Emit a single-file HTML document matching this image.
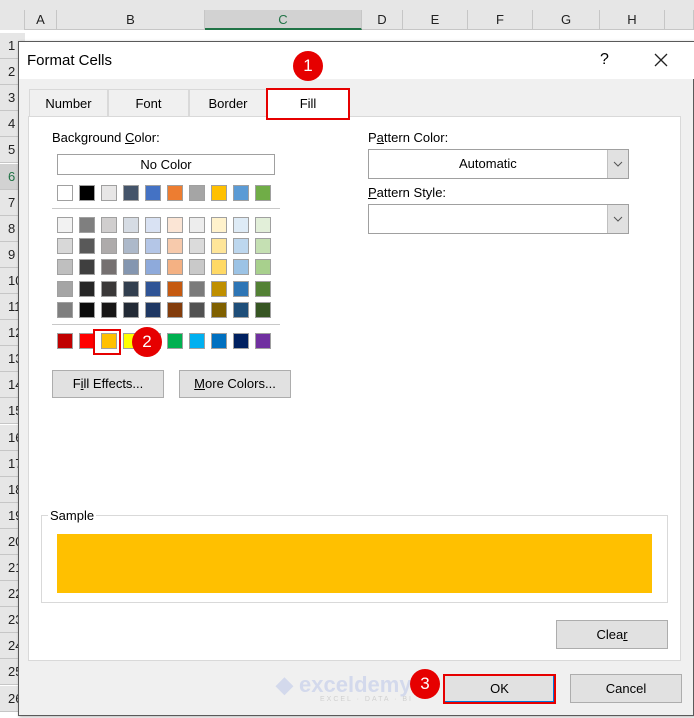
<!DOCTYPE html>
<html><head><style>
*{box-sizing:border-box;margin:0;padding:0}
body{width:694px;height:718px;overflow:hidden;background:#fff;font-family:"Liberation Sans",sans-serif;font-size:13px;color:#000;position:relative}
.a{position:absolute}
.ch{position:absolute;top:10px;height:20px;background:#e6e6e6;border-right:1px solid #c6c6c6;border-bottom:1px solid #c6c6c6;text-align:center;line-height:20px;font-size:13px;color:#222}
.rh{position:absolute;left:0;width:25px;background:#e6e6e6;border-bottom:1px solid #c6c6c6;font-size:13px;color:#222;padding-left:8px}
.sw{position:absolute;width:16px;height:16px;border:1px solid #a0a0a0}
.btn{position:absolute;background:#e1e1e1;border:1px solid #adadad;text-align:center;font-size:13px}
.tab{position:absolute;top:89px;height:27px;border:1px solid #d9d9d9;border-bottom:none;text-align:center;line-height:27px;background:#f0f0f0}
.badge{position:absolute;width:30px;height:30px;border-radius:50%;background:#e60000;color:#fff;text-align:center;line-height:30px;font-size:17px}
u{text-decoration:underline}
</style></head><body>
<div class="a" style="left:0;top:0;width:694px;height:10px;background:#e6e6e6"></div>
<div class="a" style="left:0;top:10px;width:25px;height:20px;background:#e6e6e6;border-right:1px solid #c6c6c6"></div>
<div class="ch" style="left:25px;width:32px">A</div>
<div class="ch" style="left:57px;width:148px">B</div>
<div class="ch" style="left:205px;width:157px;background:#d2d2d2;border-bottom:2px solid #217346;color:#217346">C</div>
<div class="ch" style="left:362px;width:41px">D</div>
<div class="ch" style="left:403px;width:65px">E</div>
<div class="ch" style="left:468px;width:65px">F</div>
<div class="ch" style="left:533px;width:67px">G</div>
<div class="ch" style="left:600px;width:65px">H</div>
<div class="ch" style="left:665px;width:29px"></div>
<div id="rows"></div>
<script>
var h='';for(var i=1;i<=26;i++){var t=33+(i-1)*26.1;h+='<div class="rh" style="top:'+t+'px;height:26px;line-height:26px;'+(i==6?'background:#d2d2d2;color:#217346':'')+'">'+i+'</div>';}
document.getElementById('rows').outerHTML=h;
</script>
<div class="a" style="left:18px;top:41px;width:676px;height:675px;background:#f0f0f0;border:1px solid #5a5a5a;box-shadow:1px 1px 3px rgba(0,0,0,.3)"></div>
<div class="a" style="left:19px;top:42px;width:675px;height:37px;background:#fff"></div>
<div class="a" style="left:27px;top:52px;font-size:15px">Format Cells</div>
<div class="a" style="left:600px;top:51px;font-size:16px">?</div>
<svg class="a" style="left:654px;top:53px" width="14" height="14"><path d="M1 1L13 13M13 1L1 13" stroke="#222" stroke-width="1.3"/></svg>
<div class="tab" style="left:29px;width:79px">Number</div>
<div class="tab" style="left:108px;width:81px">Font</div>
<div class="tab" style="left:189px;width:78px">Border</div>
<div class="a" style="left:28px;top:116px;width:653px;height:545px;background:#fff;border:1px solid #d9d9d9"></div>
<div class="a" style="left:266px;top:88px;width:84px;height:32px;background:#fff;border:2px solid #e60000;text-align:center;line-height:28px">Fill</div>
<div class="badge" style="left:293px;top:51px">1</div>
<div class="a" style="left:52px;top:130px">Background <u>C</u>olor:</div>
<div class="a" style="left:57px;top:154px;width:218px;height:21px;border:1px solid #a0a0a0;text-align:center;line-height:19px">No Color</div>
<div id="sw"></div>
<div class="a" style="left:52px;top:208px;width:228px;height:1px;background:#c8c8c8"></div>
<div class="a" style="left:52px;top:324px;width:228px;height:1px;background:#c8c8c8"></div>
<script>
var rows=[[185,['#fff','#000','#e7e6e6','#44546a','#4472c4','#ed7d31','#a5a5a5','#ffc000','#5b9bd5','#70ad47']],
[217,['#f2f2f2','#7f7f7f','#d0cece','#d6dce4','#d9e2f3','#fbe5d5','#ededed','#fff2cc','#deebf6','#e2efd9']],
[238,['#d8d8d8','#595959','#aeabab','#adb9ca','#b4c6e7','#f7caac','#dbdbdb','#fee599','#bdd7ee','#c5e0b3']],
[259,['#bfbfbf','#3f3f3f','#757070','#8496b0','#8eaadb','#f4b183','#c9c9c9','#ffd965','#9cc3e5','#a8d08d']],
[281,['#a5a5a5','#262626','#3a3838','#323f4f','#2f5496','#c55a11','#7b7b7b','#bf8f00','#2e75b5','#538135']],
[302,['#7f7f7f','#0c0c0c','#171616','#222a35','#1f3864','#833c0b','#525252','#7f6000','#1e4e79','#375623']],
[333,['#c00000','#ff0000','#ffc000','#ffff00','#92d050','#00b050','#00b0f0','#0070c0','#002060','#7030a0']]];
var s='';rows.forEach(function(r){r[1].forEach(function(c,i){s+='<div class="sw" style="left:'+(57+i*22)+'px;top:'+r[0]+'px;background:'+c+'"></div>';});});
document.getElementById('sw').outerHTML=s;
</script>
<div class="a" style="left:93px;top:329px;width:28px;height:26px;border:2px solid #e60000"></div>
<div class="badge" style="left:132px;top:327px">2</div>
<div class="btn" style="left:52px;top:370px;width:112px;height:28px;line-height:26px">F<u>i</u>ll Effects...</div>
<div class="btn" style="left:179px;top:370px;width:112px;height:28px;line-height:26px"><u>M</u>ore Colors...</div>
<div class="a" style="left:368px;top:130px">P<u>a</u>ttern Color:</div>
<div class="a" style="left:368px;top:149px;width:261px;height:30px;border:1px solid #a0a0a0;background:#fff;line-height:28px;padding-left:90px">Automatic</div>
<div class="a" style="left:607px;top:150px;width:21px;height:28px;background:#e1e1e1;border-left:1px solid #c0c0c0"></div>
<svg class="a" style="left:613px;top:161px" width="10" height="6"><path d="M1 1L5 5L9 1" stroke="#555" fill="none"/></svg>
<div class="a" style="left:368px;top:185px"><u>P</u>attern Style:</div>
<div class="a" style="left:368px;top:204px;width:261px;height:30px;border:1px solid #a0a0a0;background:#fff"></div>
<div class="a" style="left:607px;top:205px;width:21px;height:28px;background:#e1e1e1;border-left:1px solid #c0c0c0"></div>
<svg class="a" style="left:613px;top:216px" width="10" height="6"><path d="M1 1L5 5L9 1" stroke="#555" fill="none"/></svg>
<div class="a" style="left:41px;top:515px;width:627px;height:88px;border:1px solid #d9d9d9"></div>
<div class="a" style="left:48px;top:508px;background:#fff;padding:0 2px">Sample</div>
<div class="a" style="left:57px;top:534px;width:595px;height:59px;background:#ffc000"></div>
<div class="btn" style="left:556px;top:620px;width:112px;height:29px;line-height:27px">Clea<u>r</u></div>
<div class="a" style="left:276px;top:672px;font-size:22px;font-weight:bold;color:#d3d9ec">◆ exceldemy</div>
<div class="a" style="left:320px;top:696px;font-size:7px;color:#d0d0d0;letter-spacing:2px">EXCEL · DATA · BI</div>
<div class="btn" style="left:443px;top:674px;width:113px;height:30px;line-height:26px;border:2px solid #e60000;box-shadow:inset -1px -1px 0 #0078d7">OK</div>
<div class="badge" style="left:410px;top:669px">3</div>
<div class="btn" style="left:570px;top:674px;width:112px;height:29px;line-height:27px">Cancel</div>
</body></html>
